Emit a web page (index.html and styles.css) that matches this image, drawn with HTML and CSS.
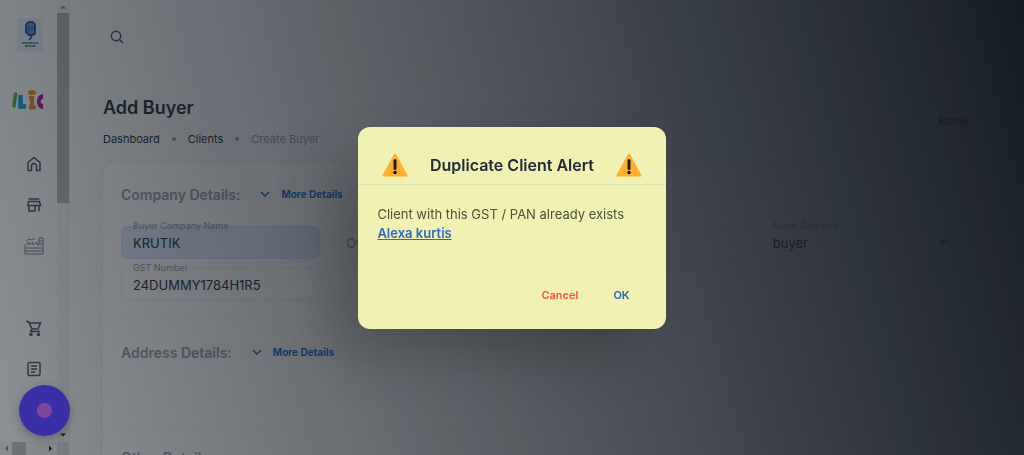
FILE: index.html
```
<!DOCTYPE html>
<html lang="en">
<head>
    <meta charset="UTF-8">
    <meta name="viewport" content="width=device-width, initial-scale=1.0">
    <title>Add Buyer</title>
    <link rel="stylesheet" href="styles.css">
</head>
<body>
    <div class="app">
        <aside class="sidebar">
            <nav class="sidebar-nav">
                <svg class="logo" viewBox="0 0 26 34" aria-label="Company logo">
                    <rect width="26" height="34" fill="#e3f0fb"/>
                    <path d="M9 14V8a4 4 0 0 1 4-4h1a4 4 0 0 1 4 4v6a3 3 0 0 1-3 3h-3z" fill="#5f93cf" stroke="#1e4fa0" stroke-width="2"/>
                    <path d="M12 8v6M15 8v5" stroke="#1e3c8c" stroke-width="1"/>
                    <path d="M14 17v3l-2 2" stroke="#1e3c8c" stroke-width="1.500"/>
                    <path d="M5 25h16M8 28h11" stroke="#4a6088" stroke-width="1.500" stroke-dasharray="3 .5"/>
                </svg>
                <svg class="brand" viewBox="0 0 31 20" aria-label="Brand">
                    <path d="M3.500 4 2 16" stroke="#5cb531" stroke-width="3.500" stroke-linecap="round"/>
                    <path d="M8.500 5v11.500h5.500" stroke="#0d9be0" stroke-width="4.500" fill="none"/>
                    <path d="M20 8v10M17 8h5M17 17.500h7" stroke="#f58a07" stroke-width="4"/>
                    <ellipse cx="20" cy="2.500" rx="4" ry="2.500" fill="#f58a07"/>
                    <path d="M31 4c-8 0-8 15 0 15z" fill="#a3179b"/>
                    <path d="M31 9c-3 0-3 5 0 5z" fill="#fff"/>
                </svg>
                <a class="nav-link home" href="#" aria-label="Home">
                    <svg viewBox="0 0 16 16"><path d="M2 6.500 8 1.500l6 5V14.500h-3.500V10a2.500 2.500 0 0 0-5 0v4.500H2z"/></svg>
                </a>
                <a class="nav-link store" href="#" aria-label="Store">
                    <svg viewBox="0 0 16 16"><path d="M2.500 2h11M2.500 4.500h11l1 4h-13zM3 8.500v5.500h6V8.500M13 8.500V14.500"/></svg>
                </a>
                <a class="nav-link factory" href="#" aria-label="Factory">
                    <svg viewBox="0 0 20 18"><path d="M1 17V8l4-3v3l4-3v3l4-3v3h2V1h4v16zM1 11h18M1 14h18M15 4h4M15 7h4M2 4l3-2 3 1 3-2"/></svg>
                </a>
                <a class="nav-link cart" href="#" aria-label="Orders">
                    <svg viewBox="0 0 16 16"><path d="M0 1.500h2.500L6 9h6l2.500-6H3.500M6 9l-1.500 2.500H14"/><circle cx="5" cy="14.500" r="1"/><circle cx="12.500" cy="14.500" r="1"/></svg>
                </a>
                <a class="nav-link note" href="#" aria-label="Reports">
                    <svg viewBox="0 0 16 16"><rect x="2" y="1.500" width="12" height="13" rx="1.500"/><path d="M5 5h6M5 8h6M5 11h4"/></svg>
                </a>
            </nav>
            <div class="scroll-y">
                <svg viewBox="0 0 12 12"><path d="M3 8l3-3 3 3z"/></svg>
                <div class="thumb-y"></div>
                <svg class="dark" viewBox="0 0 12 12"><path d="M3 4l3 3 3-3z"/></svg>
            </div>
            <div class="scroll-x">
                <svg viewBox="0 0 12 12"><path d="M8 3L5 6l3 3z"/></svg>
                <div class="thumb-x"></div>
                <svg class="dark" viewBox="0 0 12 12"><path d="M4 3l3 3-3 3z"/></svg>
            </div>
            <div class="scroll-corner"></div>
        </aside>

        <main class="main">
            <header class="topbar">
                <button class="icon-btn" type="button" aria-label="Search">
                    <svg viewBox="0 0 14 14"><circle cx="6" cy="6" r="4.700"/><path d="M9.500 9.500 13 13"/></svg>
                </button>
                <div class="avatar"></div>
            </header>
            <div class="page-head">
                <div>
                    <h1>Add Buyer</h1>
                    <ol class="breadcrumb">
                        <li><a href="#">Dashboard</a></li>
                        <li><a href="#">Clients</a></li>
                        <li class="current">Create Buyer</li>
                    </ol>
                </div>
                <span class="status">ACTIVE</span>
            </div>

            <form class="card">
                <div class="section-head">
                    <h2>Company Details:</h2>
                    <button class="more" type="button">
                        <svg viewBox="0 0 10 10"><path d="M1 3l4 4 4-4"/></svg>More Details
                    </button>
                </div>
                <div class="fields">
                    <div class="field filled">
                        <label for="company">Buyer Company Name</label>
                        <input type="text" id="company" value="KRUTIK">
                    </div>
                    <div class="field">
                        <input type="text" id="owner" placeholder="Owner Name" aria-label="Owner Name">
                    </div>
                    <div class="field">
                        <input type="text" id="contact" aria-label="Contact">
                    </div>
                    <div class="field">
                        <label for="category">Buyer Category</label>
                        <select id="category"><option>buyer</option></select>
                        <svg class="caret" viewBox="0 0 8 4"><path d="M0 0h8L4 4z"/></svg>
                    </div>
                    <div class="field wide">
                        <label for="gst">GST Number</label>
                        <input type="text" id="gst" value="24DUMMY1784H1R5">
                    </div>
                </div>
                <hr>
                <div class="section-head address">
                    <h2>Address Details:</h2>
                    <button class="more" type="button">
                        <svg viewBox="0 0 10 10"><path d="M1 3l4 4 4-4"/></svg>More Details
                    </button>
                </div>
                <hr>
                <div class="section-head other">
                    <h2>Other Details:</h2>
                </div>
            </form>
        </main>
    </div>

    <div class="backdrop">
        <div class="dialog" role="alertdialog" aria-labelledby="alert-title" aria-describedby="alert-text">
            <div class="dialog-head">
                <svg class="warning" viewBox="0 0 26 24"><path d="M13 1.500 24.500 22.500h-23z" fill="#ffb02e" stroke="#ffb02e" stroke-width="2" stroke-linejoin="round"/><path d="M13 7.500v8" stroke="#1c1c1c" stroke-width="3" stroke-linecap="round"/><circle cx="13" cy="19.500" r="1.800" fill="#1c1c1c"/></svg>
                <h2 id="alert-title">Duplicate Client Alert</h2>
                <svg class="warning" viewBox="0 0 26 24"><path d="M13 1.500 24.500 22.500h-23z" fill="#ffb02e" stroke="#ffb02e" stroke-width="2" stroke-linejoin="round"/><path d="M13 7.500v8" stroke="#1c1c1c" stroke-width="3" stroke-linecap="round"/><circle cx="13" cy="19.500" r="1.800" fill="#1c1c1c"/></svg>
            </div>
            <div class="dialog-body" id="alert-text">
                <p>Client with this GST / PAN already exists</p>
                <a href="#">Alexa kurtis</a>
            </div>
            <div class="dialog-actions">
                <button class="cancel" type="button">Cancel</button>
                <button class="ok" type="button">OK</button>
            </div>
        </div>
    </div>
    <button class="fab" type="button" aria-label="Record"></button>
</body>
</html>
```
FILE: styles.css
```
* {
    box-sizing: border-box;
}
body {
    margin: 0;
    font-family: Inter, 'Open Sans', sans-serif;
    font-size: 13px;
    color: #212b36;
    background: #f9fafb;
}
h1, h2, p, ol {
    margin: 0;
    padding: 0;
}
button {
    border: 0;
    padding: 0;
    background: none;
    font: inherit;
    cursor: pointer;
}
svg {
    display: block;
    fill: none;
}
.app {
    display: flex;
    height: 100vh;
    overflow: hidden;
}

/* sidebar */
.sidebar {
    display: grid;
    grid-template-columns: 57px 12px;
    grid-template-rows: 1fr 13px;
    height: 100vh;
    border-right: 1px solid #eceef0;
    flex-shrink: 0;
}
.sidebar-nav {
    display: flex;
    flex-direction: column;
    align-items: flex-end;
    padding: 18px 14px 0 0;
    overflow: hidden;
}
.sidebar-nav > * {
    flex-shrink: 0;
}
.logo {
    width: 26px;
    height: 34px;
}
.brand {
    width: 31px;
    height: 20px;
    margin: 38px 0 45px;
}
.nav-link {
    width: 18px;
    height: 18px;
    margin-bottom: 23px;
}
.nav-link svg {
    width: 16px;
    height: 16px;
    margin: 1px;
    stroke: #46525f;
    stroke-width: 1.5;
}
.nav-link.factory {
    margin-bottom: 64px;
}
.nav-link.factory svg {
    width: 20px;
    height: 18px;
    margin: 0 0 0 -1px;
    stroke: #76808a;
    stroke-width: 1;
}
.scroll-y, .scroll-x {
    display: flex;
    background: #f1f1f1;
}
.scroll-y {
    flex-direction: column;
}
.scroll-y svg, .scroll-x svg {
    width: 12px;
    height: 13px;
    fill: #85898c;
}
.scroll-y .dark, .scroll-x .dark {
    fill: #222;
}
.scroll-y .dark {
    margin-top: auto;
}
.scroll-x .dark {
    margin-left: auto;
}
.thumb-y {
    width: 12px;
    height: 43%;
    background: #b5b5b5;
}
.thumb-x {
    width: 14px;
    background: #c1c1c1;
}
.scroll-corner {
    background: #dcdcdc;
}

/* page */
.main {
    flex: 1;
    padding: 0 46px 0 33px;
}
.topbar {
    display: flex;
    align-items: center;
    justify-content: space-between;
    height: 74px;
    padding: 0 6px 0 7px;
}
.icon-btn svg {
    width: 14px;
    height: 14px;
    stroke: #46525f;
    stroke-width: 1.5;
}
.avatar {
    width: 18px;
    height: 18px;
    border-radius: 50%;
    background: #dfe3e8;
}
.page-head {
    display: flex;
    justify-content: space-between;
    align-items: center;
    padding-top: 21px;
    margin-bottom: 15px;
}
h1 {
    font-size: 18px;
    line-height: 26px;
    font-weight: 600;
}
.breadcrumb {
    display: flex;
    list-style: none;
    margin-top: 10px;
    font-size: 11px;
    line-height: 16px;
}
.breadcrumb a {
    color: inherit;
    text-decoration: none;
}
.breadcrumb li + li::before {
    content: "";
    display: inline-block;
    width: 4px;
    height: 4px;
    margin: 0 12px 2px;
    border-radius: 50%;
    background: #919eab;
}
.breadcrumb .current {
    color: #919eab;
}
.status {
    padding-right: 7px;
    font-size: 9px;
    font-weight: 600;
}
.card {
    padding: 18px;
    background: #fff;
    border-radius: 12px;
    box-shadow: 0 0 2px rgba(145, 158, 171, 0.3), 0 9px 18px -3px rgba(145, 158, 171, 0.12);
}
.section-head {
    display: flex;
    align-items: center;
    gap: 20px;
    height: 28px;
}
.section-head h2 {
    font-size: 14px;
    font-weight: 600;
    color: #919eab;
}
.more {
    display: flex;
    align-items: center;
    gap: 11px;
    font-size: 10px;
    font-weight: 700;
    color: #2065d1;
}
.more svg {
    width: 10px;
    height: 10px;
    stroke: #2065d1;
    stroke-width: 1.5;
}
.fields {
    display: grid;
    grid-template-columns: repeat(4, 1fr);
    gap: 9px 14px;
    margin-top: 18px;
}
.field {
    position: relative;
}
.field.wide {
    grid-column: 1 / -1;
}
.field label {
    position: absolute;
    top: -6px;
    left: 9px;
    padding: 0 3px;
    font-size: 9px;
    line-height: 12px;
    color: #919eab;
    background: #fff;
}
.field.filled label {
    background: none;
}
.field input, .field select {
    display: block;
    width: 100%;
    height: 33px;
    padding: 0 11px;
    border: 1px solid #eceef1;
    border-radius: 6px;
    background: transparent;
    font: inherit;
    color: #212b36;
    appearance: none;
}
.field input::placeholder {
    color: #919eab;
}
.field.filled input {
    background: #e0eaff;
    border-color: #d7e2f8;
}
.field .caret {
    position: absolute;
    top: 14px;
    right: 13px;
    width: 8px;
    height: 4px;
    fill: #46525f;
}
hr {
    height: 1px;
    margin: 18px 0 0;
    border: 0;
    background: #f4f5f7;
}
.section-head.address {
    height: 90px;
    padding-bottom: 26px;
}
.section-head.other {
    height: 56px;
}

/* dialog */
.backdrop {
    position: fixed;
    inset: 0;
    display: flex;
    align-items: center;
    justify-content: center;
    background: linear-gradient(75deg, rgba(22, 28, 36, 0.48) 0%, rgb(22, 28, 36) 100%);
}
.dialog {
    width: 30%;
    min-width: 300px;
    background: #f0f1b3;
    border-radius: 12px;
    box-shadow: -30px 30px 60px -6px rgba(0, 0, 0, 0.24);
}
.dialog-head {
    display: flex;
    align-items: center;
    justify-content: space-between;
    padding: 20px 24px 0;
    height: 58px;
    border-bottom: 1px solid #dfe1b0;
}
.dialog-head h2 {
    font-size: 16px;
    font-weight: 600;
    color: #212b36;
}
.warning {
    width: 26px;
    height: 24px;
}
.dialog-body {
    padding: 20px 19px 0;
    line-height: 19px;
    color: #4b5239;
}
.dialog-body a {
    font-weight: 600;
    color: #2f68c4;
}
.dialog-actions {
    display: flex;
    justify-content: flex-end;
    gap: 35px;
    padding: 44px 36px 26px;
    font-size: 11px;
    line-height: 16px;
    font-weight: 600;
}
.cancel {
    color: #ff4f3f;
}
.ok {
    color: #2f62c0;
}

.fab {
    position: fixed;
    left: 19px;
    bottom: 19px;
    width: 51px;
    height: 51px;
    border-radius: 50%;
    background: radial-gradient(circle, #7d459f 7px, #392fa6 8px);
    box-shadow: 0 3px 8px rgba(0, 0, 0, 0.25);
}
```
